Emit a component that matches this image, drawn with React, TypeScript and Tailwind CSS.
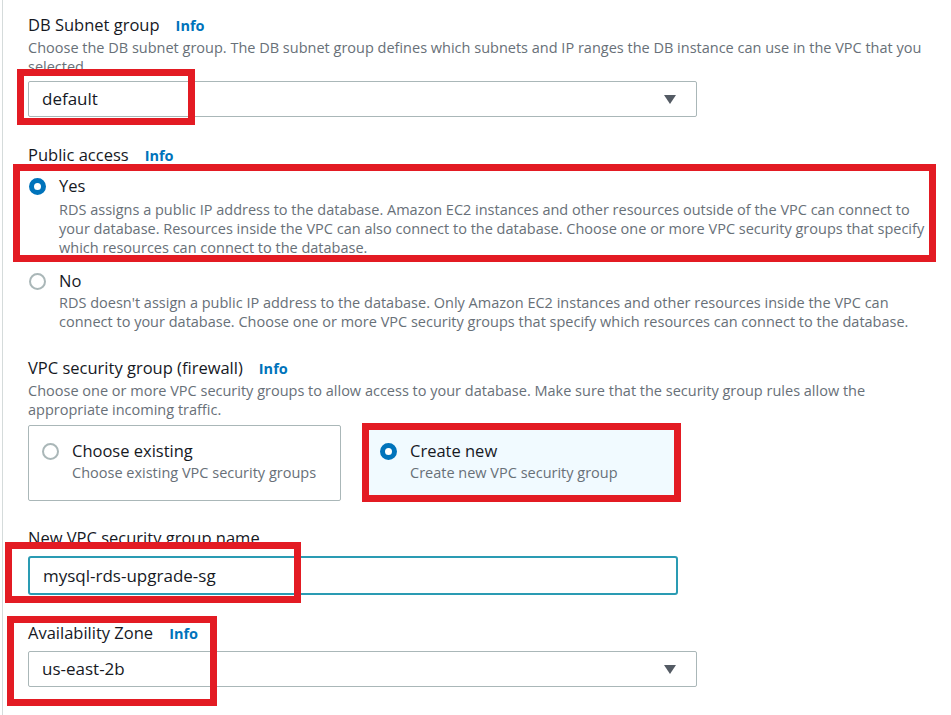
import React from 'react';

const font = "font-['Open_Sans',sans-serif]";

function Info() {
    return <span className="ml-4 text-[14.5px] font-bold text-[#0073bb]">Info</span>;
}

function Label({ children, info = true }: { children: React.ReactNode; info?: boolean }) {
    return (
        <div className="flex items-baseline h-[22px] text-[16.5px] leading-[22px] text-[#16191f]">
            <span>{children}</span>
            {info && <Info />}
        </div>
    );
}

function Desc({ children, className = '' }: { children: React.ReactNode; className?: string }) {
    return <p className={`text-[14.5px] leading-[19px] text-[#687078] ${className}`}>{children}</p>;
}

function Radio({ checked }: { checked?: boolean }) {
    return checked ? (
        <span className="block w-[17px] h-[17px] rounded-full border-[5px] border-[#0073bb] bg-white shrink-0" />
    ) : (
        <span className="block w-[17px] h-[17px] rounded-full border-2 border-[#aab7b8] bg-white shrink-0" />
    );
}

function Select({ value }: { value: string }) {
    return (
        <div className="flex items-center justify-between w-[669px] h-[36px] pl-[13px] pr-[20px] border border-[#aab7b8] rounded-[2px] bg-white text-[17px] text-[#16191f]">
            <span>{value}</span>
            <svg width="12" height="9" viewBox="0 0 12 9">
                <path d="M0 0h12L6 9z" fill="#545b64" />
            </svg>
        </div>
    );
}

function RedBox({ className }: { className: string }) {
    return <div className={`absolute border-[7px] border-[#e31b23] pointer-events-none ${className}`} />;
}

export default function App() {
    return (
        <div className={`relative w-[951px] h-[715px] overflow-hidden bg-white ${font}`}>
            <div className="absolute left-[2px] top-0 bottom-0 w-px bg-[#d5dbdb]" />

            <div className="pl-[28px] pr-[16px] pt-[14px]">
                {/* DB subnet group */}
                <Label>DB Subnet group</Label>
                <Desc className="mt-[2px]">
                    Choose the DB subnet group. The DB subnet group defines which subnets and IP ranges the DB instance can use in the VPC that you selected.
                </Desc>
                <div className="mt-[5px]">
                    <Select value="default" />
                </div>

                {/* Public access */}
                <div className="mt-[27px]">
                    <Label>Public access</Label>
                </div>
                <div className="flex gap-[13px] mt-[9px] pl-[1px]">
                    <div className="pt-[3px]"><Radio checked /></div>
                    <div>
                        <div className="text-[16.5px] leading-[22px] text-[#16191f]">Yes</div>
                        <Desc className="mt-[3px]">
                            RDS assigns a public IP address to the database. Amazon EC2 instances and other resources outside of the VPC can connect to your database. Resources inside the VPC can also connect to the database. Choose one or more VPC security groups that specify which resources can connect to the database.
                        </Desc>
                    </div>
                </div>
                <div className="flex gap-[13px] mt-[13px] pl-[1px]">
                    <div className="pt-[3px]"><Radio /></div>
                    <div>
                        <div className="text-[16.5px] leading-[22px] text-[#16191f]">No</div>
                        <Desc className="mt-[1px]">
                            RDS doesn't assign a public IP address to the database. Only Amazon EC2 instances and other resources inside the VPC can connect to your database. Choose one or more VPC security groups that specify which resources can connect to the database.
                        </Desc>
                    </div>
                </div>

                {/* VPC security group */}
                <div className="mt-[26px]">
                    <Label>VPC security group (firewall)</Label>
                </div>
                <Desc className="mt-[2px]">
                    Choose one or more VPC security groups to allow access to your database. Make sure that the security group rules allow the appropriate incoming traffic.
                </Desc>
                <div className="flex gap-[25px] mt-[6px]">
                    <div className="flex gap-[13px] w-[313px] h-[76px] pl-[13px] pt-[14px] border border-[#aab7b8] rounded-[2px]">
                        <div className="pt-[3px]"><Radio /></div>
                        <div>
                            <div className="text-[16.5px] leading-[22px] text-[#16191f]">Choose existing</div>
                            <div className="text-[14.5px] leading-[22px] text-[#687078]">Choose existing VPC security groups</div>
                        </div>
                    </div>
                    <div className="flex gap-[13px] w-[313px] h-[76px] pl-[13px] pt-[14px] border border-[#0073bb] rounded-[2px] bg-[#f1faff]">
                        <div className="pt-[3px]"><Radio checked /></div>
                        <div>
                            <div className="text-[16.5px] leading-[22px] text-[#16191f]">Create new</div>
                            <div className="text-[14.5px] leading-[22px] text-[#687078]">Create new VPC security group</div>
                        </div>
                    </div>
                </div>

                {/* New VPC security group name */}
                <div className="mt-[26px]">
                    <Label info={false}>New VPC security group name</Label>
                </div>
                <div className="mt-[7px] flex items-center w-[650px] h-[39px] pl-[13px] border-2 border-[#2a9bb3] rounded-[3px] text-[17px] text-[#16191f]">
                    mysql-rds-upgrade-sg
                </div>

                {/* Availability Zone */}
                <div className="mt-[27px]">
                    <Label>Availability Zone</Label>
                </div>
                <div className="mt-[7px]">
                    <Select value="us-east-2b" />
                </div>
            </div>

            <RedBox className="left-[17px] top-[69px] w-[178px] h-[56px]" />
            <RedBox className="left-[13px] top-[164px] w-[923px] h-[98px]" />
            <RedBox className="left-[362px] top-[423px] w-[319px] h-[79px]" />
            <RedBox className="left-[5px] top-[542px] w-[296px] h-[61px]" />
            <RedBox className="left-[7px] top-[616px] w-[210px] h-[90px]" />
        </div>
    );
}
